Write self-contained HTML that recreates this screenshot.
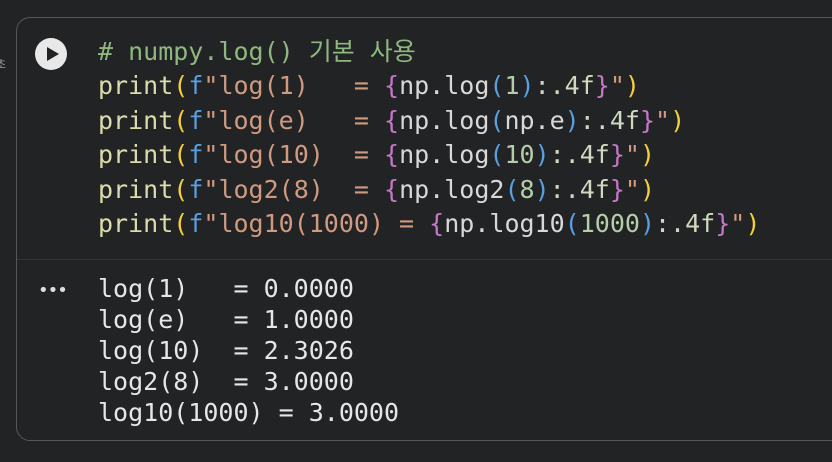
<!DOCTYPE html>
<html><head><meta charset="utf-8"><style>
html,body{margin:0;padding:0;width:832px;height:462px;background:#222325;overflow:hidden}
.cell{position:absolute;left:16px;top:17px;width:840px;height:424px;border:1px solid #55575b;border-radius:14px;box-sizing:border-box}
.sep{position:absolute;left:17px;top:259px;width:820px;height:1px;background:#333538}
.code,.out{position:absolute;left:98px;font-family:"DejaVu Sans Mono","Liberation Mono","Noto Sans CJK KR",monospace;font-size:25px;white-space:pre;letter-spacing:0px}
.code{top:35px;line-height:34.4px}
.out{top:273px;line-height:31px;color:#e6e6e6}
.c{color:#8fb77f}.p{color:#dcdcaa}.y{color:#f5cf3a}.b{color:#5a9fdf}.s{color:#cf9a80}.m{color:#c677c8}.w{color:#d8d8d8}.n{color:#b5cea8}.k{color:#cfd8c0}
.play{position:absolute;left:35px;top:38px;width:32px;height:32px;border-radius:50%;background:#e8e8e8}
.play:after{content:"";position:absolute;left:12px;top:9px;border-left:12px solid #222;border-top:7px solid transparent;border-bottom:7px solid transparent}
.dots{position:absolute;left:38px;top:280px;color:#ddd;font-size:18px;font-family:"DejaVu Sans",sans-serif;letter-spacing:-1px}
.side{position:absolute;left:-4px;top:56px;color:#999;font-size:11px;font-family:"Noto Sans CJK KR",sans-serif}
</style></head><body>
<div class="side">초</div>
<div class="cell"></div>
<div class="sep"></div>
<div class="play"></div>
<div class="code"><span class="c"># numpy.log() 기본 사용</span>
<span class="p">print</span><span class="y">(</span><span class="b">f</span><span class="s">"log(1)   = </span><span class="m">{</span><span class="w">np.log</span><span class="b">(</span><span class="n">1</span><span class="b">)</span><span class="k">:.4f</span><span class="m">}</span><span class="s">"</span><span class="y">)</span>
<span class="p">print</span><span class="y">(</span><span class="b">f</span><span class="s">"log(e)   = </span><span class="m">{</span><span class="w">np.log</span><span class="b">(</span><span class="w">np.e</span><span class="b">)</span><span class="k">:.4f</span><span class="m">}</span><span class="s">"</span><span class="y">)</span>
<span class="p">print</span><span class="y">(</span><span class="b">f</span><span class="s">"log(10)  = </span><span class="m">{</span><span class="w">np.log</span><span class="b">(</span><span class="n">10</span><span class="b">)</span><span class="k">:.4f</span><span class="m">}</span><span class="s">"</span><span class="y">)</span>
<span class="p">print</span><span class="y">(</span><span class="b">f</span><span class="s">"log2(8)  = </span><span class="m">{</span><span class="w">np.log2</span><span class="b">(</span><span class="n">8</span><span class="b">)</span><span class="k">:.4f</span><span class="m">}</span><span class="s">"</span><span class="y">)</span>
<span class="p">print</span><span class="y">(</span><span class="b">f</span><span class="s">"log10(1000) = </span><span class="m">{</span><span class="w">np.log10</span><span class="b">(</span><span class="n">1000</span><span class="b">)</span><span class="k">:.4f</span><span class="m">}</span><span class="s">"</span><span class="y">)</span></div>
<div class="dots">•••</div>
<div class="out">log(1)   = 0.0000
log(e)   = 1.0000
log(10)  = 2.3026
log2(8)  = 3.0000
log10(1000) = 3.0000</div>
</body></html>
